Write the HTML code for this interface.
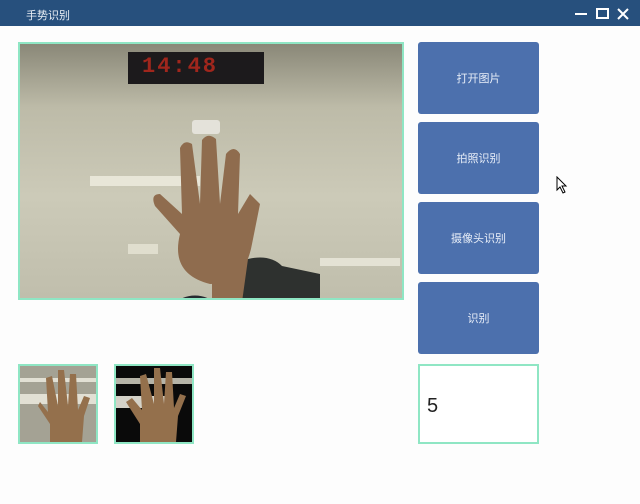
<!DOCTYPE html>
<html><head><meta charset="utf-8"><style>
*{margin:0;padding:0;box-sizing:border-box}
body{width:640px;height:504px;background:#fdfdfd;position:relative;overflow:hidden;font-family:"Liberation Sans","Noto Sans CJK SC",sans-serif}
.tb{position:absolute;left:0;top:0;width:640px;height:26px;background:#27507d;color:#e8eef5;font-size:11px}
.tb .t{position:absolute;left:26px;top:7px}
.fr{position:absolute;border:2px solid #8fe6c4;overflow:hidden}
.btn{position:absolute;left:418px;width:121px;height:72px;background:#4c70ad;border-radius:3px;color:#e8eef8;font-size:11px;display:flex;align-items:center;justify-content:center}
</style></head><body>
<div class="tb"><span class="t">手势识别</span>
<svg style="position:absolute;left:572px;top:7px" width="62" height="14" fill="none" stroke="#fff" stroke-width="2">
<line x1="3" y1="7" x2="15" y2="7"/><rect x="25" y="2" width="11" height="9"/><path d="M46 2 L56 12 M56 2 L46 12"/></svg></div>
<div class="fr" style="left:18px;top:42px;width:386px;height:258px;background:linear-gradient(180deg,#8a8878 0%,#bdbba8 25%,#cccab8 60%,#c0beac 100%)">
<div style="position:absolute;left:108px;top:8px;width:136px;height:32px;background:#1c1a1c"></div>
<div style="position:absolute;left:122px;top:10px;color:#a0261c;font:bold 22px 'Liberation Mono',monospace;letter-spacing:2px">14:48</div>
<div style="position:absolute;left:70px;top:132px;width:110px;height:10px;background:#e8e6d8"></div>
<div style="position:absolute;left:300px;top:214px;width:80px;height:8px;background:#e4e2d4"></div>
<div style="position:absolute;left:108px;top:200px;width:30px;height:10px;background:#e0dece"></div>
<div style="position:absolute;left:172px;top:76px;width:28px;height:14px;background:#e4e2da;border-radius:3px"></div>
<svg style="position:absolute;left:0;top:0" width="386" height="258">
<g fill="#8f6c4e">
<path d="M160 190 Q150 230 190 240 Q225 240 232 200 L240 160 L230 150 L218 170 L220 110 Q214 100 206 110 L200 160 L196 95 Q188 88 182 96 L180 160 L172 100 Q164 95 160 104 L162 170 L140 150 Q130 150 135 162 Z"/>
<rect x="192" y="215" width="40" height="45"/>
</g>
<path d="M228 215 Q250 210 262 222 L300 230 L300 258 L222 258 Z" fill="#2e312f"/>
<path d="M155 258 Q175 245 195 258 Z" fill="#262a30"/>
</svg>
</div>
<div class="btn" style="top:42px">打开图片</div>
<div class="btn" style="top:122px">拍照识别</div>
<div class="btn" style="top:202px">摄像头识别</div>
<div class="btn" style="top:282px">识别</div>
<div class="fr" style="left:18px;top:364px;width:80px;height:80px;background:#a4a294">
<div style="position:absolute;left:0;top:12px;width:80px;height:4px;background:#e2e0d4"></div>
<div style="position:absolute;left:0;top:28px;width:80px;height:10px;background:#e2e0d4"></div>
<svg style="position:absolute;left:0;top:0" width="76" height="76"><path d="M18 40 L30 58 L30 76 L62 76 L64 50 L70 32 L64 30 L58 44 L56 8 L50 8 L48 40 L44 4 L38 4 L38 40 L32 10 L26 12 L28 46 L20 36 Z" fill="#94704c"/></svg></div>
<div class="fr" style="left:114px;top:364px;width:80px;height:80px;background:#0a0a0a">
<div style="position:absolute;left:0;top:12px;width:76px;height:6px;background:#b6b4a8"></div>
<div style="position:absolute;left:0;top:30px;width:56px;height:12px;background:#d4d2c8"></div>
<svg style="position:absolute;left:0;top:0" width="76" height="76"><path d="M10 36 L24 58 L24 76 L60 76 L62 50 L70 30 L64 28 L58 42 L56 6 L50 6 L48 38 L44 2 L38 2 L38 38 L30 8 L24 10 L26 44 L16 32 Z" fill="#94704c"/></svg></div>
<div class="fr" style="left:418px;top:364px;width:121px;height:80px;background:#fff"><span style="position:absolute;left:7px;top:29px;font-size:20px;color:#222">5</span></div>
<svg style="position:absolute;left:556px;top:176px" width="12" height="18"><path d="M1 1 L1 14 L4 11 L7 17 L9 16 L6 10 L10 10 Z" fill="#fff" stroke="#000"/></svg>
</body></html>
